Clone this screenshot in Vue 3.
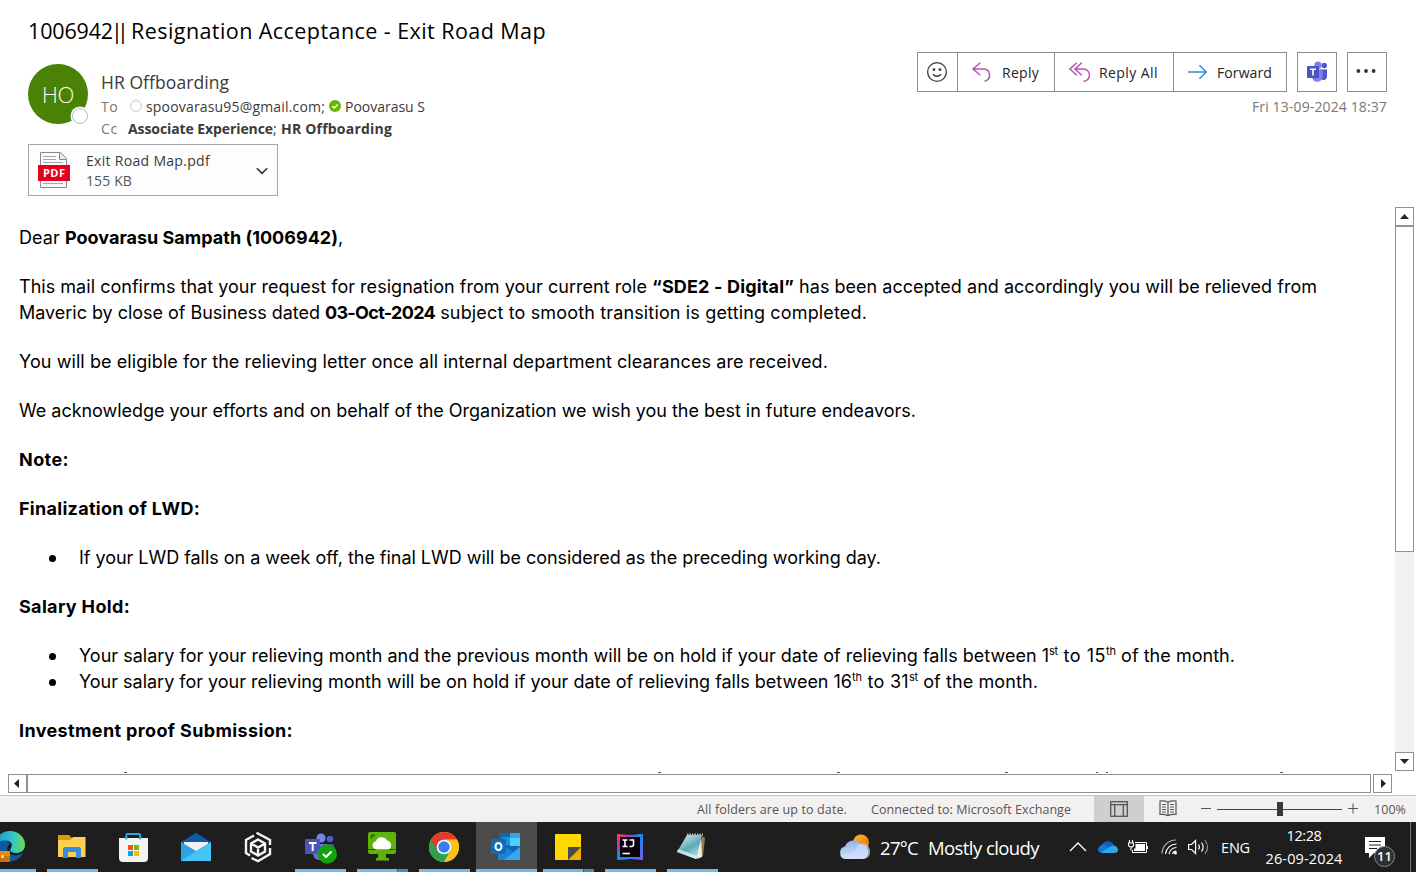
<script setup>
const vFit = {
  mounted(el, { value }) {
    const natural = el.getBoundingClientRect().width
    el.style.letterSpacing = (value - natural) / el.textContent.length + 'px'
  },
}

const paragraphs = [
  { lines: [[['Dear ', 46], ['Poovarasu Sampath (1006942)', 273, 'b'], [',', 5]]] },
  {
    lines: [
      [
        ['This mail confirms that your request for resignation from your current role ', 633],
        ['“SDE2 - Digital”', 142, 'b'],
        [' has been accepted and accordingly you will be relieved from', 523],
      ],
      [
        ['Maveric by close of Business dated ', 306],
        ['03-Oct-2024', 110, 'b'],
        [' subject to smooth transition is getting completed.', 432],
      ],
    ],
  },
  { lines: [[['You will be eligible for the relieving letter once all internal department clearances are received.', 809]]] },
  { lines: [[['We acknowledge your efforts and on behalf of the Organization we wish you the best in future endeavors.', 897]]] },
  { lines: [[['Note:', 50, 'b']]] },
  { lines: [[['Finalization of LWD:', 181, 'b']]] },
  { bullet: true, lines: [[['If your LWD falls on a week off, the final LWD will be considered as the preceding working day.', 802]]] },
  { lines: [[['Salary Hold:', 111, 'b']]] },
  {
    bullet: true,
    lines: [
      [
        ['Your salary for your relieving month and the previous month will be on hold if your date of relieving falls between 1', 970],
        ['st', 9, 'sup'],
        [' to 15', 48],
        ['th', 10, 'sup'],
        [' of the month.', 119],
      ],
      [
        ['Your salary for your relieving month will be on hold if your date of relieving falls between 16', 773],
        ['th', 10, 'sup'],
        [' to 31', 47],
        ['st', 9, 'sup'],
        [' of the month.', 120],
      ],
    ],
  },
  { lines: [[['Investment proof Submission:', 274, 'b']]] },
]
</script>

<template>
  <div class="window">
    <header class="head">
      <div class="info">
        <h1><span v-fit="85">1006942</span><span class="pipes" v-fit="12">||</span><span v-fit="421"> Resignation Acceptance - Exit Road Map</span></h1>
        <div class="sender">
          <div class="avatar">
            <span v-fit="32">HO</span>
            <i class="presence"></i>
          </div>
          <div class="people">
            <div class="name"><span v-fit="128">HR Offboarding</span></div>
            <div class="row to">
              <span class="key" v-fit="17">To</span>
              <svg class="dot" width="12" height="12" viewBox="0 0 12 12"><circle cx="6" cy="6" r="5.4" fill="#fff" stroke="#b4c8d4" /></svg>
              <span v-fit="179">spoovarasu95@gmail.com;</span>
              <svg class="dot ok" width="12" height="12" viewBox="0 0 12 12"><circle cx="6" cy="6" r="6" fill="#6bb700" /><path d="M3.4 6.1 5.3 8 8.7 4.4" fill="none" stroke="#fff" stroke-width="1.5" /></svg>
              <span v-fit="80">Poovarasu S</span>
            </div>
            <div class="row cc">
              <span class="key" v-fit="17">Cc</span>
              <span class="names"><b v-fit="145">Associate Experience</b><span v-fit="8">; </span><b v-fit="111">HR Offboarding</b></span>
            </div>
          </div>
        </div>
        <div class="attachment">
          <svg width="34" height="38" viewBox="0 0 34 38">
            <path d="M3.5 1.5h20l6 6v29h-26z" fill="#fafafa" stroke="#8a8a8a" />
            <path d="M22.5 1.5v7h7" fill="#e8e8e8" stroke="#8a8a8a" />
            <path d="M6 5.5h13M6 8.5h13M6 11.5h20M6 32.5h20" stroke="#a6a6a6" />
            <rect x="1" y="14" width="32" height="16" fill="#e2001a" />
            <text x="17" y="26.2" text-anchor="middle" textLength="22" fill="#fff" font-family="Open Sans, sans-serif" font-weight="700" font-size="11">PDF</text>
          </svg>
          <div class="file">
            <span v-fit="124">Exit Road Map.pdf</span>
            <span class="size" v-fit="46">155 KB</span>
          </div>
          <svg class="chev" width="12" height="8" viewBox="0 0 12 8"><path d="M.8 1.2 6 6.4l5.2-5.2" fill="none" stroke="#333" stroke-width="1.6" /></svg>
        </div>
      </div>

      <div class="side">
        <div class="actions">
          <div class="group">
            <button class="emoji">
              <svg width="22" height="22" viewBox="0 0 22 22" fill="none" stroke="#3b3a39" stroke-width="1.3"><circle cx="11" cy="11" r="9.4" /><path d="M6.8 13.2q4.2 4 8.4 0" /><circle cx="8" cy="8.6" r=".8" fill="#3b3a39" /><circle cx="14" cy="8.6" r=".8" fill="#3b3a39" /></svg>
            </button>
            <button class="reply">
              <svg width="22" height="20" viewBox="0 0 22 20" fill="none" stroke="#b456b8" stroke-width="1.5"><path d="M9.3.7 2 7l7.3 6.3M2 7h11.5a6.2 6.2 0 0 1 0 12.2" /></svg>
              <span v-fit="37">Reply</span>
            </button>
            <button class="all">
              <svg width="22" height="20" viewBox="0 0 22 20" fill="none" stroke="#b456b8" stroke-width="1.5"><path d="M7.8.7.9 7l6.9 6.3M12.8.7 5.9 7l6.9 6.3M5.9 7h8.5a6.1 6.1 0 0 1 0 12.2" /></svg>
              <span v-fit="59">Reply All</span>
            </button>
            <button class="forward">
              <svg width="21" height="16" viewBox="0 0 21 16" fill="none" stroke="#2f93d1" stroke-width="1.5"><path d="M1 8h18M12.4 1.2 19.2 8l-6.8 6.8" /></svg>
              <span v-fit="55">Forward</span>
            </button>
          </div>
          <button class="square">
            <svg width="22" height="22" viewBox="0 0 22 22">
              <circle cx="18.3" cy="4.5" r="2.7" fill="#5059c9" />
              <circle cx="12" cy="4.2" r="3.7" fill="#7b83eb" />
              <path d="M14 8.5h7v6.5a3.6 3.6 0 0 1-7 1.5z" fill="#5059c9" />
              <path d="M6 8.500h10.500v7a5.200 5.200 0 0 1-10.500 0z" fill="#7b83eb" />
              <path d="M9 6h4v11H7z" fill="#3b439c" />
              <rect x="1" y="5" width="12" height="12" rx="1" fill="#4b53bc" />
              <path d="M4 8.200h6M7 8.200v6.300" stroke="#fff" stroke-width="1.600" />
            </svg>
          </button>
          <button class="square dots">
            <svg width="20" height="4" viewBox="0 0 20 4" fill="#333"><circle cx="2.400" cy="2" r="1.900" /><circle cx="10" cy="2" r="1.900" /><circle cx="17.600" cy="2" r="1.900" /></svg>
          </button>
        </div>
        <div class="date"><span v-fit="135">Fri 13-09-2024 18:37</span></div>
      </div>
    </header>

    <div class="middle">
      <main class="body">
        <div v-for="(p, i) in paragraphs" :key="i" class="para" :class="{ list: p.bullet }">
          <div v-for="(line, j) in p.lines" :key="j" class="line">
            <span v-for="(s, k) in line" :key="k" v-fit="s[1]" :class="s[2]">{{ s[0] }}</span>
          </div>
        </div>
        <svg class="peek" width="1300" height="2" viewBox="0 0 1300 2" fill="#555"><path d="M124 0h3v1h-3zM658 0h3v1h-3zM837 0h3v1h-3zM1005 0h3v1h-3zM1096 0h2v1h-2zM1106 0h2v1h-2zM1280 0h3v1h-3z" /></svg>
      </main>
      <div class="vbar">
        <div class="cap"><svg width="9" height="5" viewBox="0 0 9 5"><path d="M4.500 0 9 5H0z" fill="#222" /></svg></div>
        <div class="vthumb"></div>
        <div class="vtrack"></div>
        <div class="cap"><svg width="9" height="5" viewBox="0 0 9 5"><path d="M4.500 5 9 0H0z" fill="#222" /></svg></div>
      </div>
    </div>
    <div class="hbar">
      <div class="cap start"><svg width="5" height="9" viewBox="0 0 5 9"><path d="M0 4.500 5 0v9z" fill="#222" /></svg></div>
      <div class="hthumb"></div>
      <div class="cap end"><svg width="5" height="9" viewBox="0 0 5 9"><path d="M5 4.500 0 0v9z" fill="#222" /></svg></div>
    </div>

    <footer class="status">
      <span class="folders" v-fit="150">All folders are up to date.</span>
      <span class="conn" v-fit="200">Connected to: Microsoft Exchange</span>
      <div class="view">
        <svg width="18" height="16" viewBox="0 0 18 16" fill="none" stroke="#555" stroke-width="1.300"><rect x=".7" y=".7" width="16.600" height="14.600" /><path d="M1 3.600h16M4.700 3.600V15M13.300 3.600V15" /></svg>
      </div>
      <svg class="book" width="18" height="17" viewBox="0 0 18 17" fill="none" stroke="#555" stroke-width="1.200"><path d="M9 2.200Q6 .3 1 1v13.500q5-.5 8 1.300 3-1.800 8-1.300V1q-5-.7-8 1.200zM9 2v14" /><path d="M3 4.500h4M3 7h4M3 9.500h4M3 12h4M11 4.500h4M11 7h4M11 9.500h4M11 12h4" /></svg>
      <svg class="zoom" width="158" height="16" viewBox="0 0 158 16"><path d="M0 7.500h10M147 7.500h10M152 2.500v10" stroke="#555" fill="none" /><path d="M16 8.500h125" stroke="#444" /><rect x="76" y="1" width="6" height="14" fill="#3b3a39" /></svg>
      <span v-fit="32">100%</span>
    </footer>

    <div class="taskbar">
      <div class="apps">
        <div class="app run">
          <svg viewBox="0 0 32 32">
            <defs><linearGradient id="edge" x1="0" x2="1"><stop offset="0" stop-color="#1b8fd8" /><stop offset=".6" stop-color="#36c6c8" /><stop offset="1" stop-color="#68dc50" /></linearGradient></defs>
            <path d="M1 14A15 14 0 0 1 31 14c0 6-5 8-9 8-5 0-7-2-5-5 3-5-2-8-7-7Q4 11 1 16z" fill="url(#edge)" />
            <path d="M1 15c4-7 13-7 15-2-4 1-4 9 2 11 4 1 7 0 11-2-4 8-14 11-21 6Q1 24 1 15z" fill="#0c59a4" />
            <rect x="4" y="20" width="12" height="11" rx="1" fill="#c8720c" /><path d="M4 20h12v5H4z" fill="#e58b13" /><rect x="7" y="24" width="3" height="3" fill="#ffd24a" />
          </svg>
        </div>
        <div class="app run">
          <svg viewBox="0 0 32 32"><path d="M2 4h11l3 3h12v7H2z" fill="#e19a05" /><path d="M2 9h12l3-3h12.500v20H2z" fill="#ffcf52" /><path d="M7 27V18a2 2 0 0 1 2-2h14a2 2 0 0 1 2 2v9h-5v-6h-8v6z" fill="#3a8ddb" /></svg>
        </div>
        <div class="app">
          <svg viewBox="0 0 32 32"><path d="M8.300 9V4.200q0-1.200 1.200-1.200h11.500q1.200 0 1.200 1.200V9" fill="none" stroke="#22a9e6" stroke-width="2" /><path d="M1 7h29v20q0 4-4 4H5q-4 0-4-4z" fill="#f3f3f3" /><path d="M8.300 6v2.500M22.200 6v2.500" stroke="#22a9e6" stroke-width="2" /><path d="M10 14h5v5h-5z" fill="#f25022" /><path d="M16 14h5v5h-5z" fill="#7fba00" /><path d="M10 20h5v5h-5z" fill="#00a4ef" /><path d="M16 20h5v5h-5z" fill="#ffb900" /></svg>
        </div>
        <div class="app">
          <svg viewBox="0 0 32 32"><path d="M1 11 16 2l15 9v5H1z" fill="#0b5ca8" /><path d="M4 11h24v8l-12 5-12-5z" fill="#f0f0f0" /><path d="M1 11v19h30V11L16 20z" fill="#2ba3e6" /><path d="M1 30 31 11v19z" fill="#47c4f7" /></svg>
        </div>
        <div class="app">
          <svg viewBox="0 0 32 32" fill="none" stroke="#f4f4f4" stroke-width="2.400"><path d="M12 4.500 4 9v13l4 2.500M14.500 1.800 28 9v5M28 17v6l-12 7.200L9.500 27M16 8.500l7 4v8l-7 4-7-4v-8zM9 12.500l7 4 7-4M16 16.500v8" /></svg>
        </div>
        <div class="app run">
          <svg viewBox="0 0 32 32"><circle cx="17" cy="7" r="4.500" fill="#7b83eb" /><circle cx="26" cy="8" r="3.300" fill="#5059c9" /><path d="M21 13h9v10h-9z" fill="#4048a8" /><path d="M9 13h14v9q-2 8-8 7-6-1-6-7z" fill="#6a72dc" /><rect x="1" y="8" width="15" height="15" rx="1" fill="#4b53bc" /><path d="M5 12h7.500M8.700 12v8" stroke="#fff" stroke-width="2" /><circle cx="23.300" cy="23" r="9.700" fill="#13a10e" /><path d="m19 23 3 3 5.500-5.500" fill="none" stroke="#fff" stroke-width="2.200" /></svg>
        </div>
        <div class="app run stack">
          <svg viewBox="0 0 32 32"><rect x="2" y="1" width="28" height="22" rx="2" fill="#5fb20c" /><path d="M5.500 8V4.500H9" fill="none" stroke="#245a05" stroke-width="1.300" /><path d="M12 23h8v4h3v2.500H10V27h2z" fill="#5fb20c" /><path d="M2 18.500h28" stroke="#245a05" /><path d="M10.500 18.500a4.200 4.200 0 0 1-.5-8.300 6 6 0 0 1 11-.7 4.800 4.800 0 0 1 1.500 9z" fill="#fff" /></svg>
        </div>
        <div class="app run">
          <svg viewBox="0 0 32 32"><circle cx="16" cy="16" r="15" fill="#fbc116" /><path d="M16 16 3 8.500A15 15 0 0 1 29 8.500H16z" fill="#e33b2e" /><path d="M3 8.500A15 15 0 0 0 16 31l6.500-11.300L16 16z" fill="#2da14c" /><path d="M3 8.500 9.500 19.800 16 9z" fill="#e33b2e" /><path d="M16 31 22.500 19.700 20 16l9-7.500A15 15 0 0 1 16 31z" fill="#fbc116" /><circle cx="16" cy="16" r="7.300" fill="#fff" /><circle cx="16" cy="16" r="5.800" fill="#3b7ded" /></svg>
        </div>
        <div class="app run active">
          <svg viewBox="0 0 32 32"><rect x="9" y="2" width="21" height="18" rx="1" fill="#1066b5" /><path d="M12 6h8v8h-8z" fill="#1e8ee0" /><path d="M20 2h9q1 0 1 1v4H20z" fill="#32a8e8" /><path d="M20 7h10v8H20z" fill="#50d0f8" /><path d="M8 16h8l7 5 7-5v12q0 1-1 1H9q-1 0-1-1z" fill="#1784d8" /><path d="m30 16-16 13h15q1 0 1-1z" fill="#36a9ec" /><rect x="1" y="8" width="15" height="15" rx="1.500" fill="#0f6cbd" /><ellipse cx="8.500" cy="15.500" rx="3" ry="3.600" fill="none" stroke="#fff" stroke-width="2" /></svg>
        </div>
        <div class="app run stack">
          <svg viewBox="0 0 32 32"><path d="M3 4q0-1 1-1h24q1 0 1 1v12L16 29H4q-1 0-1-1z" fill="#ffd800" /><path d="M29 16v12q0 1-1 1H16z" fill="#f3ac09" /><path d="M16 29V17q0-1 1-1h12z" fill="#4a4a4a" /></svg>
        </div>
        <div class="app run">
          <svg viewBox="0 0 32 32"><defs><linearGradient id="ij" x1="0" y1="0" x2="1" y2="1"><stop offset="0" stop-color="#fb4b35" /><stop offset=".25" stop-color="#c42cc0" /><stop offset=".5" stop-color="#1688ee" /><stop offset="1" stop-color="#8657e8" /></linearGradient></defs><path d="m3 3 13 1 13-1v26l-13-1-13 1z" fill="url(#ij)" /><path d="M23 3h5l1 8zM4 20l12 8-13 1z" fill="#178bf0" /><path d="M6 6h20v20H6z" fill="#08000c" /><path d="M8.500 9h5M11 9v6.500M8.500 15.500h5M15.500 9h4v4.500q0 2-2 2h-2" fill="none" stroke="#fff" stroke-width="1.600" /><path d="M8.500 22.500H16" stroke="#fff" stroke-width="1.600" /></svg>
        </div>
        <div class="app run">
          <svg viewBox="0 0 32 32"><defs><linearGradient id="np" x1="0" y1="0" x2=".6" y2="1"><stop offset="0" stop-color="#e5f6fa" /><stop offset=".6" stop-color="#5aa9b8" /><stop offset="1" stop-color="#b8e0e6" /></linearGradient></defs><path d="m26 5 3 2-2 18-5 3z" fill="#9c7a4a" /><path d="m25 5 1 21-6 2z" fill="#e8eeee" /><path d="M11 4h15l-6 24L1 21z" fill="url(#np)" /><path d="M1 21 20 28l1-3L2 18z" fill="#e8f4f4" opacity=".7" /><path d="M11 3.500h16" stroke="#b7b7b7" stroke-width="2" stroke-dasharray="1.500 1" /></svg>
        </div>
      </div>

      <div class="weather">
        <svg width="32" height="28" viewBox="0 0 32 28"><defs><linearGradient id="cl" x1="0" y1="0" x2="0" y2="1"><stop offset="0" stop-color="#8fb3ee" /><stop offset="1" stop-color="#d3e2fb" /></linearGradient><linearGradient id="sun" x1="0" y1="0" x2="1" y2="1"><stop offset="0" stop-color="#f5bd2a" /><stop offset="1" stop-color="#ee6e0c" /></linearGradient></defs><circle cx="22" cy="9.500" r="8" fill="url(#sun)" /><path d="M7 26a6.500 6.500 0 0 1-.8-12.800A9 9 0 0 1 22 11.500 7.400 7.400 0 0 1 24 26z" fill="url(#cl)" /><path d="M16 17a7.500 7.500 0 0 1 15 2q0 7-7 7H7q-5 0-6-4 8 1 15-5z" fill="#cfdffb" opacity=".65" /></svg>
        <span class="temp" v-fit="38">27°C</span>
        <span v-fit="111">Mostly cloudy</span>
      </div>

      <div class="tray">
        <svg class="up" width="18" height="10" viewBox="0 0 18 10"><path d="m1 9 8-8 8 8" fill="none" stroke="#fff" stroke-width="1.300" /></svg>
        <svg class="cloud" width="20" height="14" viewBox="0 0 20 14"><path d="M4 12.500A4 4 0 0 1 3.500 5 7 7 0 0 1 16 5l-1 6z" fill="#0f5fbf" /><path d="M2 6q4-2 7 0l8 5-12 2Q0 13 0 9z" fill="#1677d2" /><path d="M3 12.500 14 5.500q6 0 6 4.500 0 3-3.500 3H5z" fill="#28a8ea" /></svg>
        <svg class="battery" width="20" height="16" viewBox="0 0 20 16"><path d="M1.500 1v3M4.500 1v3M.5 4h5v2q0 2-2.500 2T.5 6zM3 8v3.500" fill="none" stroke="#fff" stroke-width="1.100" /><path d="M7 3.500h11.500v10H4.500V11" fill="none" stroke="#fff" /><path d="M7.500 5H17v7H6V9.500h1.500zM19 7h1v3h-1z" fill="#fff" /></svg>
        <svg class="wifi" width="17" height="16" viewBox="0 0 17 16" fill="none" stroke="#fff" stroke-width="1.200"><path d="M1 14.500A14 14 0 0 1 15 1" opacity=".65" /><path d="M4.500 15A11 11 0 0 1 15.500 5M8 15a8 8 0 0 1 7.500-6.500M11.500 15a4 4 0 0 1 4-3" /><circle cx="14.500" cy="14" r="1.500" fill="#fff" stroke="none" /></svg>
        <svg class="sound" width="21" height="18" viewBox="0 0 21 18" fill="none" stroke="#fff" stroke-width="1.200"><path d="M.6 6.500h3l4-4v13l-4-4h-3zM10.500 6.500q1.800 2.500 0 5M13.500 4.500q3.300 4.500 0 9" /><path d="M16.800 2q5.500 7 0 14" opacity=".5" /></svg>
        <span class="lang" v-fit="29">ENG</span>
        <div class="clock"><span v-fit="35">12:28</span><span v-fit="77">26-09-2024</span></div>
        <div class="note">
          <svg width="20" height="21" viewBox="0 0 20 21"><path d="M0 0h20v16H9l-5 5v-5H0z" fill="#fff" /><path d="M4 4.500h12M4 8h12M4 11.500h8" stroke="#1e1e1e" stroke-width="1.200" /></svg>
          <span class="count">11</span>
        </div>
      </div>
    </div>
  </div>
</template>

<style>
body {
  background: #fff;
  overflow: hidden;
}
</style>

<style scoped>
.window {
  width: 1416px;
  height: 872px;
  display: flex;
  flex-direction: column;
  overflow: hidden;
  background: #fff;
  font-family: "Open Sans", "Noto Sans", sans-serif;
  color: #3b3a39;
}
.window span,
.window b {
  white-space: pre;
}
svg {
  display: block;
  flex: none;
}
button {
  font: inherit;
  background: #fff;
  border: 0;
  padding: 0;
  display: flex;
  align-items: center;
  color: #252423;
}
.head {
  height: 207px;
  flex: none;
  display: flex;
  justify-content: space-between;
  padding: 0 29px 0 28px;
}
h1 {
  margin: 0;
  padding-top: 12px;
  height: 52px;
  box-sizing: border-box;
  font-size: 21.500px;
  line-height: 38px;
  font-weight: 400;
  color: #000;
}
.pipes {
  margin: 0 2px 0 -2px;
}
.sender {
  display: flex;
  gap: 13px;
  padding-top: 12px;
  height: 80px;
}
.avatar {
  position: relative;
  width: 60px;
  height: 60px;
  border-radius: 50%;
  background: #498205;
  color: #fff;
  font-size: 22px;
  font-weight: 300;
  line-height: 61px;
  text-align: center;
}
.presence {
  position: absolute;
  left: 44px;
  top: 44px;
  width: 14px;
  height: 14px;
  border: 1px solid #a9c3d0;
  border-radius: 50%;
  background: #fff;
  box-shadow: 0 0 0 1.500px #fff;
}
.name {
  font-size: 17.500px;
  line-height: 24px;
  height: 25px;
  padding-top: 6px;
}
.row {
  display: flex;
  align-items: center;
  font-size: 14px;
  height: 22px;
  line-height: 22px;
}
.to {
  height: 23px;
}
.key {
  color: #797775;
}
.dot {
  margin: 0 4px 2px 12px;
}
.dot.ok {
  margin: 0 4px 2px;
}
.names {
  margin-left: 10px;
}
.attachment {
  width: 250px;
  height: 52px;
  box-sizing: border-box;
  border: 1px solid #a6a6a6;
  background: #fdfdfd;
  display: flex;
  align-items: center;
  padding: 0 9px 0 8px;
}
.file {
  flex: 1;
  display: flex;
  flex-direction: column;
  align-items: flex-start;
  margin-left: 15px;
  padding-top: 2px;
  font-size: 14px;
  line-height: 20px;
}
.chev {
  margin-top: 2px;
}
.size {
  color: #555;
}
.side {
  padding-top: 52px;
}
.actions {
  display: flex;
  gap: 10px;
  height: 40px;
  font-size: 14px;
}
.group {
  display: flex;
  border: 1px solid #8d8d8d;
}
.group button + button {
  border-left: 1px solid #8d8d8d;
}
.emoji {
  width: 39px;
  padding-right: 2px;
  box-sizing: border-box;
  justify-content: center;
}
.reply,
.all,
.forward {
  box-sizing: border-box;
}
.reply {
  width: 97px;
  padding-left: 13px;
  gap: 9px;
}
.all {
  width: 119px;
  padding-left: 14px;
  gap: 8px;
}
.forward {
  width: 113px;
  padding-left: 13px;
  gap: 9px;
}
.square {
  width: 40px;
  border: 1px solid #8d8d8d;
  justify-content: center;
}
.dots {
  box-sizing: border-box;
  padding: 0 2px 2px 0;
}
.date {
  text-align: right;
  font-size: 14px;
  line-height: 30px;
  color: #797775;
}
.middle {
  flex: none;
  height: 567px;
  display: flex;
  padding-right: 2px;
}
.body {
  position: relative;
  flex: 1;
  height: 566px;
  overflow: hidden;
  box-sizing: border-box;
  padding: 18px 0 0 19px;
  font-family: Inter, "Liberation Sans", sans-serif;
  font-size: 18px;
  color: #000;
}
.para {
  margin-bottom: 23px;
}
.line {
  height: 26px;
  line-height: 26px;
  white-space: pre;
  display: flex;
}
.list .line::before {
  content: "";
  width: 7px;
  height: 7px;
  border-radius: 50%;
  background: #000;
  margin: 10px 23px 0 30px;
}
.b {
  font-weight: 700;
}
.sup {
  font-size: 11px;
  position: relative;
  top: -5px;
}
.peek {
  position: absolute;
  left: 0;
  top: 565px;
}
.vbar {
  width: 19px;
  height: 564px;
  display: flex;
  flex-direction: column;
}
.cap {
  width: 19px;
  height: 19px;
  box-sizing: border-box;
  border: 1px solid #919191;
  display: flex;
  align-items: center;
  justify-content: center;
}
.vthumb {
  height: 326px;
  box-sizing: border-box;
  border: 1px solid #919191;
}
.vtrack {
  flex: 1;
  background: #f2f2f2;
}
.hbar {
  flex: none;
  display: flex;
  height: 21px;
  padding-left: 8px;
}
.hthumb {
  width: 1344px;
  height: 19px;
  box-sizing: border-box;
  border: 1px solid #919191;
}
.start {
  padding-right: 2px;
}
.end {
  margin-left: 2px;
  padding-left: 2px;
}
.status {
  flex: none;
  height: 27px;
  box-sizing: border-box;
  border-top: 1px solid #c8c6c4;
  background: #f3f1f0;
  display: flex;
  align-items: center;
  padding-left: 697px;
  font-size: 12.500px;
  color: #555;
}
.conn {
  margin: 0 23px 0 24px;
}
.view {
  width: 50px;
  height: 26px;
  background: #d0cfce;
  display: flex;
  align-items: center;
  justify-content: center;
}
.book {
  margin: 0 24px 2px 15px;
}
.zoom {
  margin-right: 15px;
}
.taskbar {
  flex: none;
  height: 50px;
  background: #1e1e1e;
  display: flex;
  color: #fff;
}
.apps {
  display: flex;
  margin-left: -21px;
  width: 860px;
}
.app {
  position: relative;
  width: 62px;
  height: 50px;
  display: flex;
  align-items: center;
  justify-content: center;
}
.app svg {
  width: 32px;
  height: 32px;
  overflow: visible;
}
.run::after {
  content: "";
  position: absolute;
  left: 6px;
  bottom: 0;
  width: 51px;
  height: 3px;
  background: #76b9ed;
}
.stack::after {
  background: linear-gradient(90deg, #76b9ed 40px, #35607f 40px, #35607f 41px, #5589b1 41px);
}
.active::before {
  content: "";
  position: absolute;
  left: 1px;
  top: 0;
  width: 61px;
  height: 50px;
  background: #4b4b4b;
}
.active svg {
  position: relative;
}
.active::after {
  left: 1px;
  width: 61px;
}
.weather {
  display: flex;
  align-items: center;
  width: 230px;
  font-size: 18.500px;
}
.temp {
  margin: 0 10px 0 9px;
}
.tray {
  flex: 1;
  display: flex;
  align-items: center;
  font-size: 14.500px;
  border-right: 1px solid #777;
  margin-right: 5px;
}
.cloud {
  margin-left: 11px;
}
.battery {
  margin-left: 10px;
}
.wifi {
  margin-left: 13px;
}
.sound {
  margin-left: 10px;
}
.lang {
  margin-left: 12px;
}
.clock {
  width: 78px;
  margin-left: 15px;
  display: flex;
  flex-direction: column;
  align-items: center;
  line-height: 23px;
  padding-bottom: 1px;
}
.note {
  position: relative;
  margin: 0 0 0 22px;
}
.count {
  position: absolute;
  left: 9px;
  top: 9px;
  width: 19px;
  height: 19px;
  border: 1px solid #8a8a8a;
  border-radius: 50%;
  background: #303030;
  font-size: 13px;
  font-weight: 600;
  line-height: 19px;
  text-align: center;
}
</style>
